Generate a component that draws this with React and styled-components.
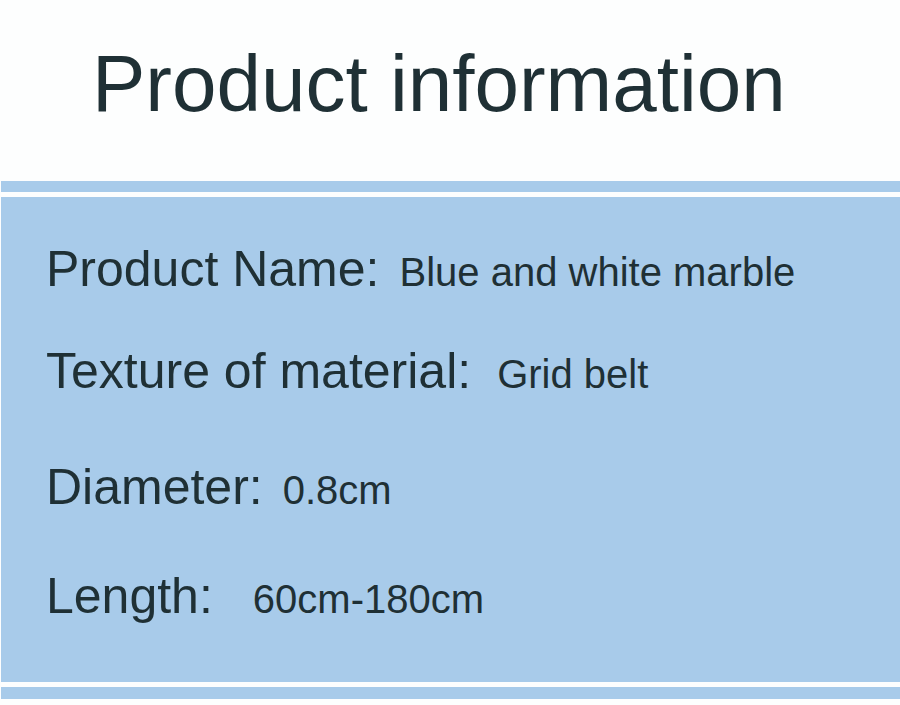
import styled, { createGlobalStyle } from "styled-components";

const GlobalStyle = createGlobalStyle`
  body {
    margin: 0;
    background: #fdfefe;
    font-family: "Liberation Sans", Arial, sans-serif;
  }
`;

const Page = styled.div`
  width: 900px;
  height: 705px;
  background: #fdfefe;
  color: #1f3035;
  overflow: hidden;
`;

const Header = styled.header`
  height: 181px;
  box-sizing: border-box;
  padding: 44px 0 0 92px;
`;

const Title = styled.h1`
  margin: 0;
  font-size: 80px;
  font-weight: 400;
  line-height: 80px;
  white-space: nowrap;
`;

const Band = styled.div`
  margin-left: 1px;
  height: ${(p) => p.h}px;
  margin-top: ${(p) => p.top || 0}px;
  background: #a8cbea;
`;

const Panel = styled.section`
  margin: 5px 0 0 1px;
  height: 485px;
  box-sizing: border-box;
  padding: 47px 0 0 45px;
  background: #a8cbea;
`;

const Row = styled.div`
  display: flex;
  align-items: baseline;
  gap: ${(p) => p.gap}px;
  margin-top: ${(p) => p.top || 0}px;
  height: 50px;
  white-space: nowrap;
`;

const Label = styled.span`
  font-size: 50px;
  line-height: 50px;
`;

const Value = styled.span`
  font-size: 40px;
  line-height: 40px;
`;

const rows = [
  { label: "Product Name:", value: "Blue and white marble", gap: 20, top: 0 },
  { label: "Texture of material:", value: "Grid belt", gap: 26, top: 52 },
  { label: "Diameter:", value: "0.8cm", gap: 20, top: 66 },
  { label: "Length:", value: "60cm-180cm", gap: 40, top: 59 },
];

export default function App() {
  return (
    <Page>
      <GlobalStyle />
      <Header>
        <Title>Product information</Title>
      </Header>
      <Band h={11} />
      <Panel>
        {rows.map((r) => (
          <Row key={r.label} gap={r.gap} top={r.top}>
            <Label>{r.label}</Label>
            <Value>{r.value}</Value>
          </Row>
        ))}
      </Panel>
      <Band h={12} top={5} />
    </Page>
  );
}
